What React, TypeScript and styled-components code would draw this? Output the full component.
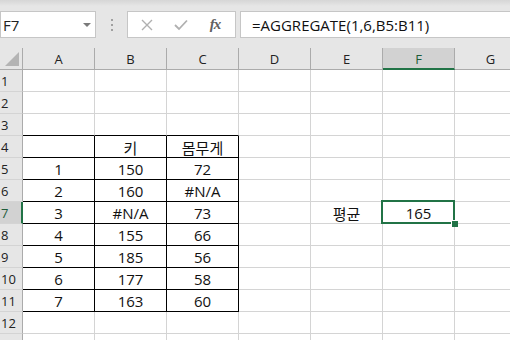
import React from "react";
import styled, { createGlobalStyle, css } from "styled-components";

const GREEN = "#217346";
const GRID = "#d4d4d4";

const GlobalStyle = createGlobalStyle`
  html, body {
    margin: 0;
    padding: 0;
    background: #ffffff;
    overflow: hidden;
  }
  body {
    font-family: "Open Sans", "Noto Sans CJK KR", sans-serif;
  }
`;

const Window = styled.div`
  width: 510px;
  height: 340px;
  overflow: hidden;
  background: #ffffff;
`;

const FormulaBar = styled.div`
  height: 48px;
  box-sizing: border-box;
  padding-top: 11px;
  display: flex;
  align-items: flex-start;
  background: linear-gradient(#d6d6d6 0px, #e6e6e6 6px, #e6e6e6 100%);
`;

const NameBox = styled.div`
  width: 96px;
  height: 27px;
  box-sizing: border-box;
  background: #ffffff;
  border: 1px solid #c6c6c6;
  display: flex;
  align-items: center;
  justify-content: space-between;
  padding: 0 4px 0 2px;
  font-size: 15px;
  color: #222;
`;

const DropArrow = styled.span`
  width: 0;
  height: 0;
  border-left: 4px solid transparent;
  border-right: 4px solid transparent;
  border-top: 4px solid #7a7a7a;
  margin-top: 1px;
`;

const Grip = styled.div`
  width: 31px;
  height: 27px;
  display: flex;
  flex-direction: column;
  align-items: center;
  justify-content: center;
  gap: 3px;
  & > span {
    width: 2px;
    height: 2px;
    background: #a0a0a0;
  }
`;

const ActionBox = styled.div`
  width: 109px;
  height: 27px;
  box-sizing: border-box;
  background: #ffffff;
  border: 1px solid #c6c6c6;
  display: flex;
  align-items: center;
  justify-content: space-around;
  padding: 0 4px 0 2px;
`;

const FxLabel = styled.span`
  font-family: "Liberation Serif", "DejaVu Serif", serif;
  font-style: italic;
  font-weight: bold;
  font-size: 15px;
  color: #606060;
  letter-spacing: -1px;
`;

const FormulaInput = styled.div`
  flex: 1;
  height: 27px;
  margin-left: 4px;
  box-sizing: border-box;
  background: #ffffff;
  border: 1px solid #c6c6c6;
  border-right: none;
  display: flex;
  align-items: center;
  padding-left: 11px;
  font-size: 15px;
  color: #111;
  white-space: nowrap;
`;

const Sheet = styled.div`
  display: grid;
  grid-template-columns: 23px repeat(7, 72px);
  grid-auto-rows: 22px;
`;

const Corner = styled.div`
  background: #e6e6e6;
  border-right: 1px solid #ababab;
  border-bottom: 1px solid #ababab;
  box-sizing: border-box;
  position: relative;
  &::after {
    content: "";
    position: absolute;
    right: 3px;
    bottom: 3px;
    width: 0;
    height: 0;
    border-left: 14px solid transparent;
    border-bottom: 14px solid #b4b4b4;
  }
`;

const ColHead = styled.div<{ $active?: boolean }>`
  box-sizing: border-box;
  background: ${(p) => (p.$active ? "#d2d2d2" : "#e6e6e6")};
  border-right: 1px solid #ababab;
  border-bottom: ${(p) => (p.$active ? `2px solid ${GREEN}` : "1px solid #ababab")};
  display: flex;
  align-items: center;
  justify-content: center;
  padding-top: ${(p) => (p.$active ? "1px" : "0")};
  font-size: 13px;
  color: ${(p) => (p.$active ? "#1e5c3a" : "#222")};
`;

const RowHead = styled.div<{ $active?: boolean }>`
  box-sizing: border-box;
  background: ${(p) => (p.$active ? "#d2d2d2" : "#e6e6e6")};
  border-bottom: 1px solid ${GRID};
  border-right: ${(p) => (p.$active ? `2px solid ${GREEN}` : "1px solid #ababab")};
  display: flex;
  align-items: center;
  padding-left: 1px;
  font-size: 13px;
  color: ${(p) => (p.$active ? "#1e5c3a" : "#222")};
`;

const Cell = styled.div<{ $darkRight?: boolean; $darkBottom?: boolean; $selected?: boolean }>`
  box-sizing: border-box;
  border-right: 1px solid ${(p) => (p.$darkRight ? "#000" : GRID)};
  border-bottom: 1px solid ${(p) => (p.$darkBottom ? "#000" : GRID)};
  display: flex;
  align-items: center;
  justify-content: center;
  padding-top: 1px;
  font-size: 15px;
  color: #111;
  white-space: nowrap;
  position: relative;
  ${(p) =>
    p.$selected &&
    css`
      &::before {
        content: "";
        position: absolute;
        left: -2px;
        top: -2px;
        right: -1px;
        bottom: -1px;
        border: 2px solid ${GREEN};
        z-index: 2;
      }
      &::after {
        content: "";
        position: absolute;
        right: -4px;
        bottom: -4px;
        width: 6px;
        height: 6px;
        background: ${GREEN};
        border: 1px solid #ffffff;
        border-right: none;
        border-bottom: none;
        z-index: 3;
      }
    `}
`;

const columns = ["A", "B", "C", "D", "E", "F", "G"];

// sheet content, keyed by row number; index 0 = column A
const data: Record<number, string[]> = {
  4: ["", "키", "몸무게"],
  5: ["1", "150", "72"],
  6: ["2", "160", "#N/A"],
  7: ["3", "#N/A", "73", "", "평균", "165"],
  8: ["4", "155", "66"],
  9: ["5", "185", "56"],
  10: ["6", "177", "58"],
  11: ["7", "163", "60"],
};

const ACTIVE_ROW = 7;
const ACTIVE_COL = 5;
const VISIBLE_ROWS = 12;

const CancelIcon = () => (
  <svg width="12" height="12" viewBox="0 0 12 12">
    <path d="M1 1 L11 11 M11 1 L1 11" stroke="#b0b0b0" strokeWidth="1.4" fill="none" />
  </svg>
);

const EnterIcon = () => (
  <svg width="14" height="12" viewBox="0 0 14 12">
    <path d="M1 6 L5 10 L13 1.5" stroke="#b0b0b0" strokeWidth="1.8" fill="none" />
  </svg>
);

export default function App() {
  // one extra row peeks out under the last full one
  const rows = Array.from({ length: VISIBLE_ROWS + 1 }, (_, i) => i + 1);
  return (
    <Window>
      <GlobalStyle />
      <FormulaBar>
        <NameBox>
          F7
          <DropArrow />
        </NameBox>
        <Grip>
          <span />
          <span />
          <span />
        </Grip>
        <ActionBox>
          <CancelIcon />
          <EnterIcon />
          <FxLabel>fx</FxLabel>
        </ActionBox>
        <FormulaInput>=AGGREGATE(1,6,B5:B11)</FormulaInput>
      </FormulaBar>
      <Sheet>
        <Corner />
        {columns.map((c, i) => (
          <ColHead key={c} $active={i === ACTIVE_COL}>
            {c}
          </ColHead>
        ))}
        {rows.map((r) => (
          <React.Fragment key={r}>
            <RowHead $active={r === ACTIVE_ROW}>{r <= VISIBLE_ROWS ? r : ""}</RowHead>
            {columns.map((c, i) => {
              const inTable = i <= 2 && r >= 4 && r <= 11;
              const aboveTable = i <= 2 && r === 3;
              return (
                <Cell
                  key={c}
                  $darkRight={inTable}
                  $darkBottom={inTable || aboveTable}
                  $selected={r === ACTIVE_ROW && i === ACTIVE_COL}
                >
                  {data[r]?.[i] ?? ""}
                </Cell>
              );
            })}
          </React.Fragment>
        ))}
      </Sheet>
    </Window>
  );
}
